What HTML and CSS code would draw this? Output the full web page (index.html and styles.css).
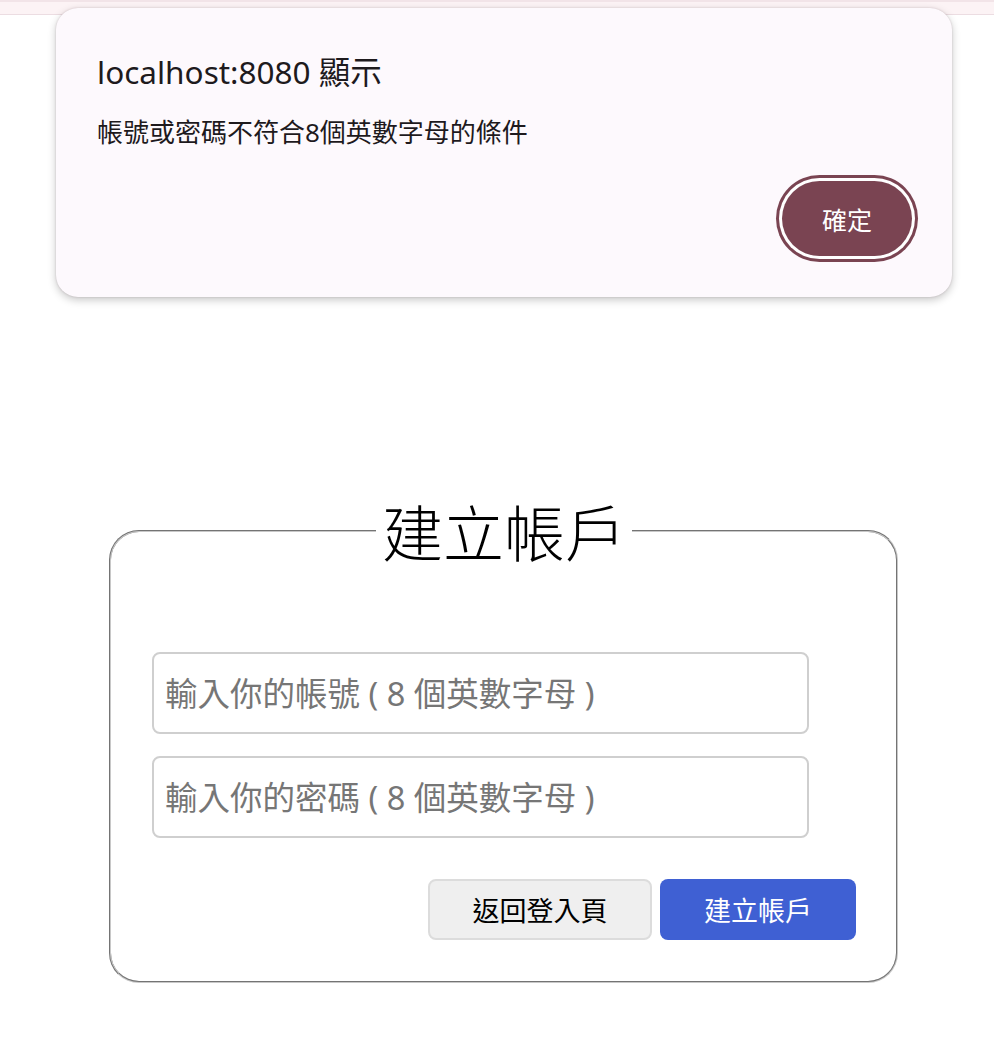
FILE: index.html
```html
<!DOCTYPE html>
<html lang="zh-Hant">
<head>
<meta charset="utf-8">
<title>建立帳戶</title>
<link rel="stylesheet" href="styles.css">
</head>
<body>
<div class="topbar"></div>
<main class="page">
  <form class="signup">
    <fieldset class="box">
      <legend class="box-title">建立帳戶</legend>
      <input class="field" type="text" placeholder="輸入你的帳號 ( 8 個英數字母 )">
      <input class="field" type="password" placeholder="輸入你的密碼 ( 8 個英數字母 )">
      <div class="actions">
        <button type="button" class="btn btn-back">返回登入頁</button>
        <button type="button" class="btn btn-create">建立帳戶</button>
      </div>
    </fieldset>
  </form>
</main>
<div class="dialog">
  <div class="dialog-title">localhost:8080 顯示</div>
  <div class="dialog-msg">帳號或密碼不符合8個英數字母的條件</div>
  <div class="dialog-actions">
    <button type="button" class="ok">確定</button>
  </div>
</div>
</body>
</html>
```
FILE: styles.css
```css
html, body {
  margin: 0;
  padding: 0;
  background: #ffffff;
  font-family: "Noto Sans", "Noto Sans CJK TC", sans-serif;
}
.topbar {
  height: 12px;
  background: #fcf3f5;
  border-top: 2px solid #f2e4e8;
  border-bottom: 1px solid #ecdde2;
}
.page {
  padding-top: 484px;
  padding-left: 109px;
}
.signup {
  margin: 0;
}
.box {
  width: 789px;
  box-sizing: border-box;
  margin: 0;
  border: 2px groove #c8c8c8;
  border-radius: 30px;
  padding: 89px 40px 41px 41px;
}
.box-title {
  margin: 0 auto;
  padding: 0 6px;
  font-family: "Noto Sans CJK TC", sans-serif;
  font-weight: 300;
  font-size: 61px;
  line-height: 64px;
  color: #000;
}
.field {
  display: block;
  width: 657px;
  height: 82px;
  box-sizing: border-box;
  margin: 0 0 22px 0;
  border: 2px solid #cfcfcf;
  border-radius: 8px;
  padding: 0 11px;
  font-family: "Noto Sans", "Noto Sans CJK TC", sans-serif;
  font-size: 32.5px;
  color: #333;
  background: #fff;
}
.field::placeholder {
  color: #767676;
}
.actions {
  display: flex;
  justify-content: flex-end;
  gap: 8px;
  margin-top: 41px;
}
.btn {
  height: 61px;
  box-sizing: border-box;
  border-radius: 8px;
  font-family: "Noto Sans CJK TC", sans-serif;
  font-size: 27px;
  padding: 0;
}
.btn-back {
  width: 224px;
  background: #efefef;
  border: 2px solid #dcdcdc;
  color: #000;
}
.btn-create {
  width: 196px;
  background: #3f60d3;
  border: none;
  color: #fff;
}
.dialog {
  position: absolute;
  left: 56px;
  top: 8px;
  width: 896px;
  height: 289px;
  box-sizing: border-box;
  background: #fdf9fd;
  border-radius: 22px;
  box-shadow: 0 3px 8px rgba(0, 0, 0, 0.22), 0 0 2px rgba(120, 80, 90, 0.25);
  padding: 40px 40px 0 41px;
  color: #1e1a1d;
}
.dialog-title {
  font-family: "Noto Sans", "Noto Sans CJK TC", sans-serif;
  font-size: 31.5px;
  line-height: 48px;
}
.dialog-msg {
  font-family: "Noto Sans", "Noto Sans CJK TC", sans-serif;
  font-size: 26px;
  line-height: 36px;
  margin-top: 18px;
}
.dialog-actions {
  display: flex;
  justify-content: flex-end;
  margin-top: 31px;
}
.ok {
  width: 130px;
  height: 75px;
  border: none;
  border-radius: 38px;
  background: #7a4452;
  color: #fff;
  font-family: "Noto Sans CJK TC", sans-serif;
  font-size: 25px;
  box-shadow: 0 0 0 3px #ffffff, 0 0 0 6px #7a4452;
  padding: 0;
}
```
